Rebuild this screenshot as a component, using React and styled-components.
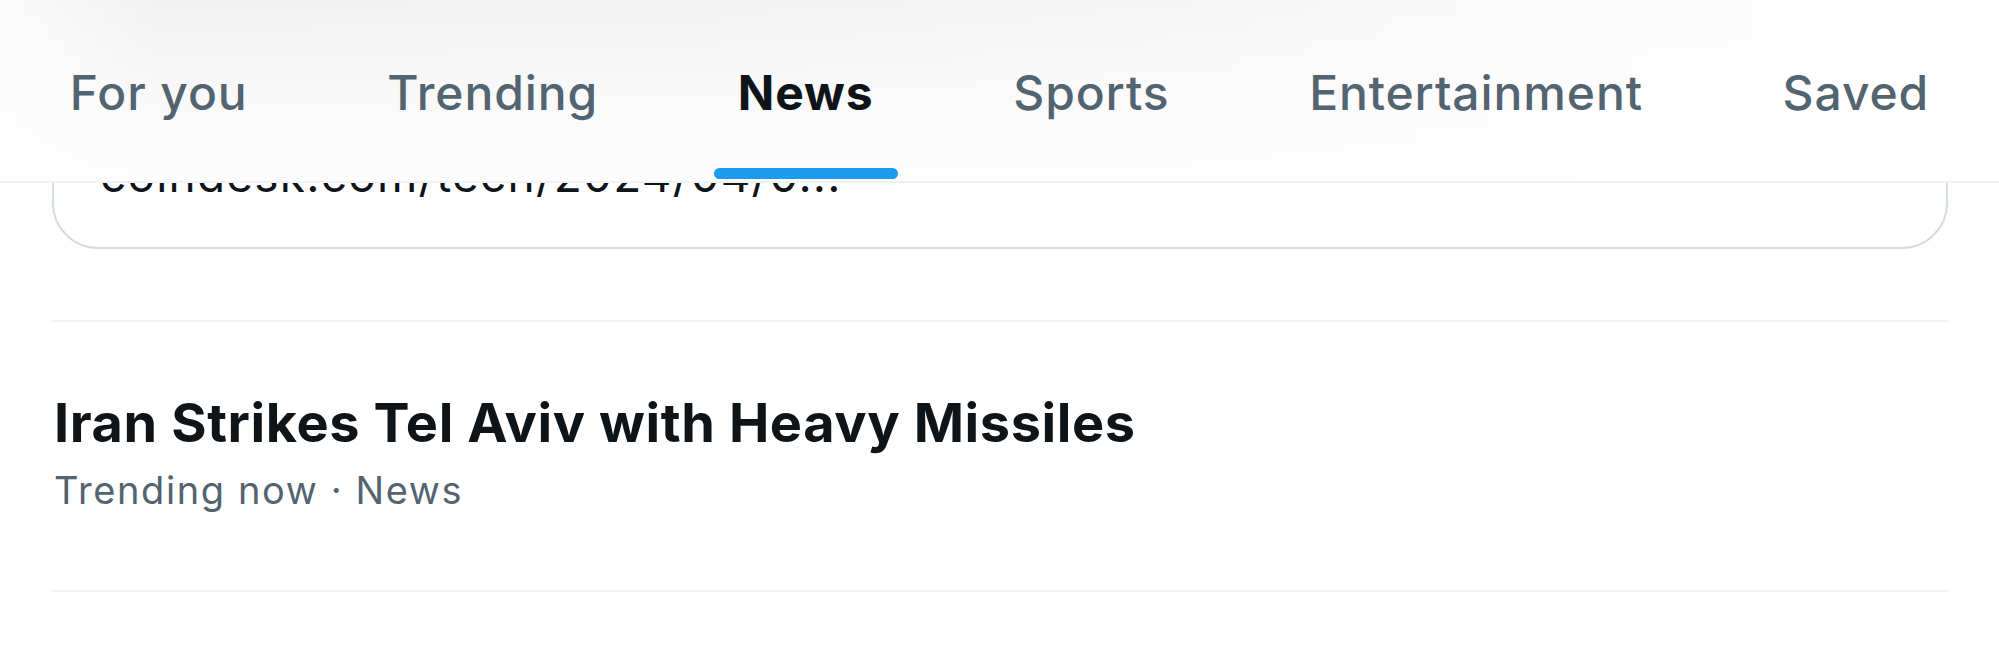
import React from "react";
import styled, { createGlobalStyle } from "styled-components";

const GlobalStyle = createGlobalStyle`
    * {
        box-sizing: border-box;
    }
    body {
        margin: 0;
        background-color: #fff;
        font-family: Inter, "Noto Sans", "Liberation Sans", sans-serif;
        color: #0f1419;
    }
`;

const Page = styled.div`
    position: relative;
    width: 1999px;
    height: 653px;
    overflow: hidden;
    background-color: #fff;
`;

const Header = styled.header`
    position: absolute;
    top: 0;
    left: 0;
    right: 0;
    z-index: 2;
    height: 183px;
    border-bottom: 2px solid #eff3f4;
    background:
        linear-gradient(180deg, rgba(255, 255, 255, 0) 0%, rgba(255, 255, 255, 0.55) 55%, rgba(255, 255, 255, 0.85) 100%),
        linear-gradient(90deg, #fbfbfb 0%, #f2f2f3 8%, #f3f3f4 35%, #f6f6f6 60%, #fcfcfc 82%, #fff 100%);
`;

const TabList = styled.nav`
    display: flex;
    height: 100%;
`;

const Tab = styled.div`
    flex: 1 1 auto;
    display: flex;
    justify-content: center;
`;

const TabInner = styled.div`
    display: flex;
    flex-direction: column;
    align-items: center;
    padding: 64px 27px 0;
`;

const TabLabel = styled.span`
    font-size: 48px;
    line-height: 1.2;
    white-space: nowrap;
    font-weight: ${(p) => (p.$active ? 700 : 500)};
    color: ${(p) => (p.$active ? "#0f1419" : "#536471")};
    letter-spacing: 0.9px;
`;

const Indicator = styled.div`
    margin: auto -24px 2px;
    align-self: stretch;
    height: 11px;
    border-radius: 9999px;
    background-color: #1d9bf0;
`;

const Feed = styled.main`
    display: flex;
    flex-direction: column;
    padding-top: 100px;
`;

const LinkCard = styled.div`
    margin: 0 51px 71px 52px;
    padding: 46px 46px 44px;
    border: 2px solid #d5dde1;
    border-radius: 46px;
`;

const CardText = styled.div`
    font-size: 46px;
    line-height: 55px;
    letter-spacing: 1.2px;
    color: #0f1419;
    white-space: nowrap;
`;

const Divider = styled.hr`
    margin: 0 51px 0 52px;
    border: none;
    height: 2px;
    background-color: #eff3f4;
`;

const Trend = styled.div`
    display: flex;
    flex-direction: column;
    gap: 10px;
    padding: 67px 54px 75px;
`;

const TrendTitle = styled.div`
    font-size: 54px;
    line-height: 67px;
    font-weight: 700;
    letter-spacing: 0.6px;
    color: #0f1419;
`;

const TrendMeta = styled.div`
    font-size: 38px;
    line-height: 49px;
    letter-spacing: 1.6px;
    color: #536471;
`;

const tabs = ["For you", "Trending", "News", "Sports", "Entertainment", "Saved"];

export default function App() {
    return (
        <>
            <GlobalStyle />
            <Page>
                <Header>
                    <TabList>
                        {tabs.map((t) => (
                            <Tab key={t}>
                                <TabInner>
                                    <TabLabel $active={t === "News"}>{t}</TabLabel>
                                    {t === "News" && <Indicator />}
                                </TabInner>
                            </Tab>
                        ))}
                    </TabList>
                </Header>
                <Feed>
                    <LinkCard>
                        <CardText>coindesk.com/tech/2024/04/0...</CardText>
                    </LinkCard>
                    <Divider />
                    <Trend>
                        <TrendTitle>Iran Strikes Tel Aviv with Heavy Missiles</TrendTitle>
                        <TrendMeta>Trending now · News</TrendMeta>
                    </Trend>
                    <Divider />
                </Feed>
            </Page>
        </>
    );
}
